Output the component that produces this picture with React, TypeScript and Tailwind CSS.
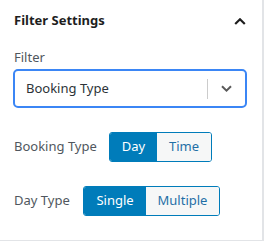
import React from "react";

const font = { fontFamily: '"Noto Sans", "Open Sans", sans-serif' };

function Segmented({ options, active }: { options: { label: string; w: string }[]; active: number }) {
  return (
    <div className="flex h-[30px] rounded-[3px] border border-[#007cba] overflow-hidden">
      {options.map((o, i) => (
        <div
          key={o.label}
          className={`${o.w} flex items-center justify-center text-[13px] ${
            i === active ? "bg-[#007cba] text-white" : "bg-[#f6f7f7] text-[#1f6fa6]"
          }`}
        >
          {o.label}
        </div>
      ))}
    </div>
  );
}

export default function App() {
  return (
    <div className="w-[264px] h-[242px] bg-white" style={font}>
      <div className="w-[264px] h-[241px] border-r-2 border-b border-[#e2e4e7]">
        <div className="h-[42px] flex items-center justify-between pl-[14px] pr-[16px]">
          <span className="text-[13px] font-bold text-[#1e1e1e]">Filter Settings</span>
          <svg width="12" height="7" viewBox="0 0 12 7" fill="none">
            <path d="M1.2 6 L6 1.3 L10.8 6" stroke="#1e1e1e" strokeWidth="2.2" />
          </svg>
        </div>
        <div className="mt-[7px] pl-[14px] h-[18px] flex items-center text-[13px] text-[#50575e]">Filter</div>
        <div className="mt-[2px] ml-[13px] w-[234px] h-[39px] border-2 border-[#3b86f5] rounded-[5px] flex items-center">
          <span className="pl-[11px] flex-1 text-[13px] text-[#2c3338]">Booking Type</span>
          <div className="w-px h-[20px] bg-[#cccccc]" />
          <div className="w-[37px] flex justify-center">
            <svg width="11" height="7" viewBox="0 0 11 7" fill="none">
              <path d="M1 1.2 L5.5 5.6 L10 1.2" stroke="#5a5a5a" strokeWidth="2" />
            </svg>
          </div>
        </div>
        <div className="mt-[24px] pl-[14px] flex items-center">
          <span className="w-[95px] shrink-0 whitespace-nowrap text-[13px] text-[#50575e]">Booking Type</span>
          <Segmented
            active={0}
            options={[
              { label: "Day", w: "w-[47px]" },
              { label: "Time", w: "w-[54px]" },
            ]}
          />
        </div>
        <div className="mt-[24px] pl-[14px] flex items-center">
          <span className="w-[69px] shrink-0 whitespace-nowrap text-[13px] text-[#50575e]">Day Type</span>
          <Segmented
            active={0}
            options={[
              { label: "Single", w: "w-[62px]" },
              { label: "Multiple", w: "w-[73px]" },
            ]}
          />
        </div>
      </div>
    </div>
  );
}
